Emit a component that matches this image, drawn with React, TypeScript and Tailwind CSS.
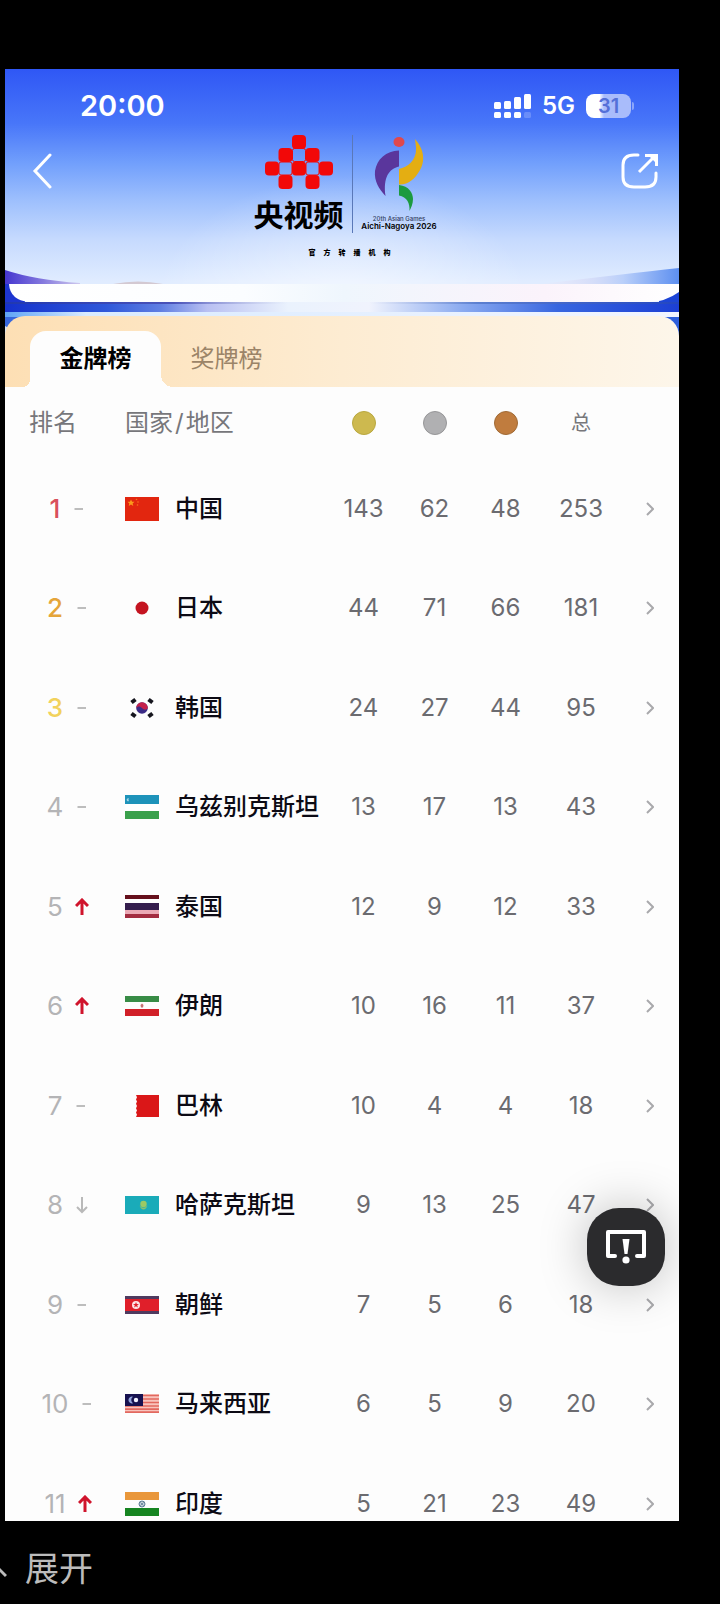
import { useState } from 'react';
import type { ReactNode } from 'react';

type Trend = 'same' | 'up' | 'down';

interface Standing {
  rank: number;
  trend: Trend;
  code: string;
  name: string;
  gold: number;
  silver: number;
  bronze: number;
  total: number;
}

const standings: Standing[] = [
  { rank: 1, trend: 'same', code: 'cn', name: '中国', gold: 143, silver: 62, bronze: 48, total: 253 },
  { rank: 2, trend: 'same', code: 'jp', name: '日本', gold: 44, silver: 71, bronze: 66, total: 181 },
  { rank: 3, trend: 'same', code: 'kr', name: '韩国', gold: 24, silver: 27, bronze: 44, total: 95 },
  { rank: 4, trend: 'same', code: 'uz', name: '乌兹别克斯坦', gold: 13, silver: 17, bronze: 13, total: 43 },
  { rank: 5, trend: 'up', code: 'th', name: '泰国', gold: 12, silver: 9, bronze: 12, total: 33 },
  { rank: 6, trend: 'up', code: 'ir', name: '伊朗', gold: 10, silver: 16, bronze: 11, total: 37 },
  { rank: 7, trend: 'same', code: 'bh', name: '巴林', gold: 10, silver: 4, bronze: 4, total: 18 },
  { rank: 8, trend: 'down', code: 'kz', name: '哈萨克斯坦', gold: 9, silver: 13, bronze: 25, total: 47 },
  { rank: 9, trend: 'same', code: 'kp', name: '朝鲜', gold: 7, silver: 5, bronze: 6, total: 18 },
  { rank: 10, trend: 'same', code: 'my', name: '马来西亚', gold: 6, silver: 5, bronze: 9, total: 20 },
  { rank: 11, trend: 'up', code: 'in', name: '印度', gold: 5, silver: 21, bronze: 23, total: 49 },
];

const rankColors: Record<number, string> = {
  1: 'text-[#d9505c] font-medium',
  2: 'text-[#e5a53a] font-medium',
  3: 'text-[#f2d25c] font-medium',
};

const flags: Record<string, ReactNode> = {
  cn: (
    <>
      <rect width="34" height="24" fill="#e2260f" />
      <path d="M6 2.500l1.100 2.300h2.400L7.600 6.400l.7 2.500L6 7.500 3.700 8.900l.7-2.500L2.500 4.800h2.400z" fill="#fb9a1c" />
      <circle cx="11.500" cy="2.500" r=".8" fill="#f7711c" />
      <circle cx="13" cy="5" r=".8" fill="#f7711c" />
      <circle cx="12.500" cy="8" r=".8" fill="#f7711c" />
    </>
  ),
  jp: <circle cx="17" cy="12" r="6.500" fill="#c41420" />,
  kr: (
    <>
      <circle cx="17" cy="12" r="5.800" fill="#3b2b86" />
      <path d="M11.200 12a5.800 5.800 0 0 1 11.600 0c-1.500 2.500-4 2-5.800 0s-4.300-2.300-5.800 0z" fill="#c4204a" />
      <path d="M6.500 6.500l4-3M23.500 3.500l4 3M6.500 17.500l4 3M23.500 20.500l4-3" stroke="#16161e" strokeWidth="4" />
    </>
  ),
  uz: (
    <>
      <rect width="34" height="9" fill="#1e93ba" />
      <rect y="9" width="34" height="7" fill="#fff" />
      <rect y="16" width="34" height="8" fill="#3aa04c" />
      <path d="M4 3.500a1.500 1.500 0 1 0 0 2.500 1.800 1.800 0 0 1 0-2.500z" fill="#a5d6e6" />
    </>
  ),
  th: (
    <>
      <rect width="34" height="4" fill="#66101c" />
      <rect y="8" width="34" height="7" fill="#341d4d" />
      <rect y="15" width="34" height="4" fill="#eba9b5" />
      <rect y="19" width="34" height="4" fill="#a32c40" />
    </>
  ),
  ir: (
    <>
      <rect y="2" width="34" height="6" fill="#388c46" />
      <rect y="15" width="34" height="7" fill="#d12028" />
      <path d="M17 9.500l1.500 1.500-.5 2.500h-2l-.5-2.500z" fill="#c47070" />
    </>
  ),
  bh: <path d="M11 1h23v22H11l1-2.200-1-2.200 1-2.200-1-2.200 1-2.200-1-2.200 1-2.200-1-2.200 1-2.200z" fill="#da1718" />,
  kz: (
    <>
      <rect y="3" width="34" height="18" fill="#1aabb9" />
      <circle cx="18.500" cy="11" r="3.200" fill="#9cc964" />
      <path d="M14.500 12.500q4 4.500 8 0-1.500 4-4 4t-4-4z" fill="#8bc46c" />
    </>
  ),
  kp: (
    <>
      <rect y="3" width="34" height="18" fill="#4f3a5f" />
      <rect y="6" width="34" height="12" fill="#e01f2a" />
      <circle cx="11" cy="12" r="4" fill="#fde5e8" />
      <path d="M11 9l.8 2H14l-1.800 1.300.7 2.200L11 13.200l-1.900 1.300.7-2.200L8 11h2.200z" fill="#e01f2a" />
    </>
  ),
  my: (
    <>
      <rect y="2" width="34" height="19" fill="#f8c4bd" />
      <path d="M0 3.500h34M0 7h34M0 10.500h34M0 14h34M0 17.200h34M0 20.200h34" stroke="#e2685f" strokeWidth="1.700" />
      <rect y="2" width="18" height="12" fill="#171250" />
      <path d="M8 4.800a3.400 3.400 0 1 0 0 6.400 3.800 3.800 0 0 1 0-6.400z" fill="#93a4dc" />
      <circle cx="11" cy="8" r="2.200" fill="#f2f2ff" />
    </>
  ),
  in: (
    <>
      <rect width="34" height="8" fill="#e9973b" />
      <rect y="16" width="34" height="8" fill="#168521" />
      <circle cx="17" cy="12" r="3" fill="none" stroke="#5f7f96" strokeWidth="1" />
      <path d="M17 9v6M14 12h6M15 10l4 4M19 10l-4 4" stroke="#5f7f96" strokeWidth=".7" />
    </>
  ),
};

function Flag({ code }: { code: string }) {
  return (
    <svg viewBox="0 0 34 24" className="h-6 w-[34px] shrink-0" aria-hidden="true">
      {flags[code]}
    </svg>
  );
}

function TrendMark({ trend }: { trend: Trend }) {
  if (trend === 'same') {
    return (
      <svg viewBox="0 0 14 18" className="h-[18px] w-3.5" fill="none">
        <path d="M2.500 9h8.500" stroke="#bdbdbd" strokeWidth="2" />
      </svg>
    );
  }
  if (trend === 'up') {
    return (
      <svg viewBox="0 0 14 18" className="h-[18px] w-3.5" fill="none">
        <path d="M7 17V2.500M1 8l6-6 6 6" stroke="#d0142c" strokeWidth="3" />
      </svg>
    );
  }
  return (
    <svg viewBox="0 0 14 18" className="h-[18px] w-3.5" fill="none">
      <path d="M7 1v14.500M2 11l5 5 5-5" stroke="#b9b9b9" strokeWidth="2" />
    </svg>
  );
}

function StatusBar() {
  return (
    <div className="flex h-[62px] items-center justify-between pt-3 pr-[45px] pl-[75px] text-white">
      <span className="text-[29px] leading-9 font-semibold">20:00</span>
      <div className="flex items-center gap-[11px]">
        <svg viewBox="0 0 37 24" className="h-6 w-[37px]" fill="#fff">
          <rect x="0" y="8" width="7" height="7" rx="1.500" />
          <rect x="10" y="7" width="7" height="8" rx="1.500" />
          <rect x="20" y="3" width="7" height="12" rx="1.500" />
          <rect x="30" y="0" width="7" height="15" rx="1.500" />
          <rect x="0" y="18" width="7" height="6" rx="1.500" />
          <rect x="10" y="18" width="7" height="6" rx="1.500" />
          <rect x="20" y="18" width="7" height="6" rx="1.500" />
          <rect x="30" y="18" width="7" height="6" rx="1.500" opacity=".2" />
        </svg>
        <span className="text-[24px] leading-8 font-semibold">5G</span>
        <div className="flex items-center gap-px">
          <span className="flex h-6 w-[45px] items-center justify-center rounded-lg bg-linear-to-r from-white from-30% to-[#a9bcfb] to-40% text-[20px] leading-6 font-semibold text-[#5470d8]">
            31
          </span>
          <span className="h-2 w-0.5 rounded-r bg-[#8ba6fa]" />
        </div>
      </div>
    </div>
  );
}

function VideoLogo() {
  return (
    <div className="flex flex-col items-center">
      <svg viewBox="0 0 68 54" className="h-[54px] w-[68px]">
        <g fill="#f20808">
          <rect x="27" y="0" width="14" height="14" rx="4" />
          <rect x="13.500" y="13" width="14" height="14" rx="4" />
          <rect x="40.500" y="13" width="14" height="14" rx="4" />
          <rect x="0" y="26.500" width="14" height="14" rx="4" />
          <rect x="27" y="26.500" width="14" height="14" rx="4" />
          <rect x="54" y="26.500" width="14" height="14" rx="4" />
          <rect x="13.500" y="40" width="14" height="14" rx="4" />
          <rect x="40.500" y="40" width="14" height="14" rx="4" />
        </g>
        <g fill="none" stroke="#f20808" strokeWidth="1">
          <rect x="27.500" y="13.500" width="13" height="13" rx="2" />
          <rect x="14" y="27" width="13" height="13" rx="2" />
          <rect x="41" y="27" width="13" height="13" rx="2" />
        </g>
      </svg>
      <span className="mt-2 text-[30px] leading-9 font-bold text-black">央视频</span>
    </div>
  );
}

function GamesLogo() {
  return (
    <div className="flex w-[73px] flex-col items-center pt-0.5">
      <svg viewBox="0 0 50 75" className="h-[75px] w-[50px]">
        <ellipse cx="25" cy="5" rx="5.500" ry="5" fill="#e0484c" />
        <path d="M25 13.500v16C15 32 9 40 11.500 59 5 52 0 44 1 34 3 22 12 14 25 13.500z" fill="#5a369c" />
        <path d="M41 2c8 9 11 20 5 31-5 9-12 15-21 14.500V32c9-2 18-9 17-22z" fill="#e4ae12" />
        <path d="M25 48c10 1 14 8 14 14 0 5-2 9-3.500 12C36 66 33 60 25 58.500z" fill="#1c9a3f" />
      </svg>
      <span className="mt-1 text-[6px] leading-[6px] font-medium whitespace-nowrap text-[#2f3a5c]">20th Asian Games</span>
      <span className="text-[8px] leading-2 font-semibold whitespace-nowrap text-black">Aichi-Nagoya 2026</span>
    </div>
  );
}

function BannerWaves() {
  return (
    <svg
      viewBox="0 0 674 80"
      preserveAspectRatio="none"
      className="absolute inset-x-0 -bottom-5 h-20 w-full"
      aria-hidden="true"
    >
      <defs>
        <linearGradient id="band">
          <stop offset="0" stopColor="#1531cc" />
          <stop offset=".15" stopColor="#2f58da" />
          <stop offset=".23" stopColor="#5f7ee2" />
          <stop offset=".3" stopColor="#b9c0f2" />
          <stop offset=".42" stopColor="#eaf2fd" />
          <stop offset=".54" stopColor="#f0f3fd" />
          <stop offset=".68" stopColor="#8aaaf0" />
          <stop offset=".82" stopColor="#3866e0" />
          <stop offset="1" stopColor="#1c3fd4" />
        </linearGradient>
        <linearGradient id="edge">
          <stop offset="0" stopColor="#2038b0" />
          <stop offset=".25" stopColor="#4a52b8" />
          <stop offset=".42" stopColor="#c9cfe6" stopOpacity="0" />
          <stop offset=".54" stopColor="#c9cfe6" stopOpacity="0" />
          <stop offset=".7" stopColor="#5b7fd0" />
          <stop offset="1" stopColor="#2346c0" />
        </linearGradient>
        <linearGradient id="glow">
          <stop offset="0" stopColor="#5fa4f6" />
          <stop offset=".12" stopColor="#d9ebff" />
          <stop offset="1" stopColor="#f2f5ff" />
        </linearGradient>
        <linearGradient id="panel">
          <stop offset="0" stopColor="#ffffff" />
          <stop offset=".35" stopColor="#fbfdff" />
          <stop offset=".5" stopColor="#eff6fd" />
          <stop offset=".8" stopColor="#fbf3fb" />
          <stop offset="1" stopColor="#ffffff" />
        </linearGradient>
        <linearGradient id="violet">
          <stop offset="0" stopColor="#4536cf" />
          <stop offset=".5" stopColor="#8479de" />
          <stop offset="1" stopColor="#cfc9ee" />
        </linearGradient>
        <linearGradient id="sky">
          <stop offset="0" stopColor="#f3dfee" stopOpacity="0" />
          <stop offset=".6" stopColor="#b9cffa" />
          <stop offset="1" stopColor="#5d8ff0" />
        </linearGradient>
      </defs>
      <path d="M0 14Q30 24 75 27v1H0z" fill="url(#violet)" />
      <path d="M108 28q25-5 50 0z" fill="#d3c9d2" />
      <path d="M535 28Q620 18 674 12v16z" fill="url(#sky)" />
      <path d="M0 28h20v20H0z" fill="#1d35d0" />
      <path d="M654 34h20v14h-20z" fill="#1d45d6" />
      <path d="M0 46h674v10H0z" fill="url(#band)" />
      <path d="M0 46h674v2H0z" fill="url(#edge)" />
      <path d="M0 56h674v5H0z" fill="url(#glow)" />
      <path d="M0 61h30v19H0z" fill="#3767dd" />
      <path d="M644 61h30v19h-30z" fill="#2e5fdc" />
      <path d="M0 70q6 2 10 10H0z" fill="#d5e2f6" />
      <path d="M4 28q1 16 20 18h620q16 0 30-10v-8z" fill="url(#panel)" />
    </svg>
  );
}

function Header() {
  return (
    <header className="relative h-[247px] bg-[linear-gradient(180deg,#2f57f5_0%,#4876f9_22%,#719ffc_38%,#9dbffd_53%,#c6dafe_69%,#e0ecff_86%)]">
      <div className="absolute inset-0 bg-radial-[at_50%_100%] from-white/60 to-transparent to-40%" />
      <BannerWaves />
      <div className="relative">
        <StatusBar />
        <div className="flex items-start">
          <button type="button" aria-label="返回" className="flex h-20 w-20 items-center pl-[27px]">
            <svg viewBox="0 0 20 36" className="h-9 w-5" fill="none">
              <path d="M18 2L3 18l15 16" stroke="#fff" strokeWidth="3" strokeLinecap="round" />
            </svg>
          </button>
          <div className="flex flex-1 flex-col items-center pt-1">
            <div className="mr-2.5 flex">
              <VideoLogo />
              <div className="mr-[10px] ml-2 w-px bg-[#5a78b8]" />
              <GamesLogo />
            </div>
            <div className="mt-4 flex gap-2 text-[7px] leading-2 font-black text-black">
              {['官', '方', '转', '播', '机', '构'].map((char) => (
                <span key={char}>{char}</span>
              ))}
            </div>
          </div>
          <button type="button" aria-label="分享" className="flex h-20 w-[65px] items-center justify-end pr-5">
            <svg viewBox="0 0 38 36" className="h-9 w-[38px]" fill="none" stroke="#fff" strokeWidth="3">
              <path d="M17 2h-4Q2 2 2 12v12q0 10 11 10h11q11 0 11-10v-4" strokeLinecap="round" />
              <path d="M18 19L34 3" />
              <path d="M24 2.500h11.500V13" />
              <path d="M27 2h9v9z" fill="#fff" stroke="none" />
            </svg>
          </button>
        </div>
      </div>
    </header>
  );
}

function MedalDot({ label, className }: { label: string; className: string }) {
  return <span role="img" aria-label={label} className={`mx-auto block size-6 rounded-full border ${className}`} />;
}

export default function App() {
  const [activeTab, setActiveTab] = useState('gold');

  return (
    <div className="flex h-screen flex-col bg-black pt-[69px] font-[Inter,'Noto_Sans_CJK_SC',sans-serif]">
      <main className="relative mr-[41px] ml-[5px] min-h-0 flex-1 overflow-hidden bg-[#fdfdfd]">
        <Header />

        {/* Tabs */}
        <div
          role="tablist"
          className="relative flex h-[71px] items-end rounded-t-[20px] bg-linear-to-r from-[#fddfb4] via-[#fdecd2] via-50% to-[#fdf6ea] pl-[25px] text-[24px] leading-8"
        >
          <button
            type="button"
            role="tab"
            aria-selected={activeTab === 'gold'}
            onClick={() => setActiveTab('gold')}
            className="relative h-14 w-[131px] rounded-t-2xl bg-[#fdfdfd] font-bold text-black before:absolute before:bottom-0 before:-left-2 before:size-2 before:bg-[radial-gradient(circle_at_top_left,transparent_8px,#fdfdfd_8px)] after:absolute after:-right-3 after:bottom-0 after:size-3 after:bg-[radial-gradient(circle_at_top_right,transparent_12px,#fdfdfd_12px)]"
          >
            金牌榜
          </button>
          <button
            type="button"
            role="tab"
            aria-selected={activeTab === 'medal'}
            onClick={() => setActiveTab('medal')}
            className="h-14 w-[131px] text-[#9b8468]"
          >
            奖牌榜
          </button>
        </div>

        {/* Medal table */}
        <table className="w-full table-fixed border-collapse text-center text-[24px] leading-8 text-[#6b6b70]">
          <colgroup>
            <col className="w-[120px]" />
            <col />
            <col className="w-[71px]" />
            <col className="w-[71px]" />
            <col className="w-[71px]" />
            <col className="w-[80px]" />
            <col className="w-[58px]" />
          </colgroup>
          <thead>
            <tr className="h-[72px] text-[#77777b]">
              <th scope="col" className="pl-6 text-left font-normal">排名</th>
              <th scope="col" className="text-left font-normal">
                国家<span className="mx-0.5">/</span>地区
              </th>
              <th scope="col">
                <MedalDot label="金牌" className="border-[#b9a83f] bg-[#cdb94f]" />
              </th>
              <th scope="col">
                <MedalDot label="银牌" className="border-[#969698] bg-[#b0b0b2]" />
              </th>
              <th scope="col">
                <MedalDot label="铜牌" className="border-[#a06a35] bg-[#c07c3e]" />
              </th>
              <th scope="col" className="text-[20px] font-normal">总</th>
              <td />
            </tr>
          </thead>
          <tbody>
            {standings.map((item) => (
              <tr key={item.code} className="odd:h-[99px] even:h-[100px]">
                <td className="pl-1.5">
                  <div className="flex items-center justify-center gap-3">
                    <span className={`text-[26px] ${rankColors[item.rank] ?? 'text-[#b4b4b6]'}`}>{item.rank}</span>
                    <TrendMark trend={item.trend} />
                  </div>
                </td>
                <td>
                  <div className="flex items-center gap-4">
                    <Flag code={item.code} />
                    <span className="font-medium whitespace-nowrap text-[#0c0a14]">{item.name}</span>
                  </div>
                </td>
                <td>{item.gold}</td>
                <td>{item.silver}</td>
                <td>{item.bronze}</td>
                <td>{item.total}</td>
                <td>
                  <button type="button" aria-label={item.name} className="mx-auto flex size-8 items-center justify-center">
                    <svg viewBox="0 0 8 14" className="h-3.5 w-2" fill="none">
                      <path d="M1 1l6 6-6 6" stroke="#a9a9ac" strokeWidth="2" />
                    </svg>
                  </button>
                </td>
              </tr>
            ))}
          </tbody>
        </table>

        {/* Feedback button */}
        <button
          type="button"
          aria-label="反馈"
          className="absolute right-3.5 bottom-[235px] flex size-[78px] items-center justify-center rounded-[32px] bg-[#2b2b2d] shadow-[0_0_48px_rgba(0,0,0,0.25)]"
        >
          <svg viewBox="0 0 40 36" className="h-9 w-10" fill="none" stroke="#fff">
            <path d="M9 27H2V3h36v24h-7" strokeWidth="4" strokeLinejoin="round" strokeLinecap="round" />
            <path d="M16.500 10h7l-2 15h-3z" fill="#fff" stroke="none" />
            <circle cx="20" cy="31" r="3.600" fill="#fff" stroke="none" />
          </svg>
        </button>
      </main>

      <footer className="flex h-[83px] shrink-0 items-center pt-3">
        <button type="button" className="flex items-center gap-[18px] text-[34px] leading-10 text-[#bcbcbc]">
          <svg viewBox="0 0 7 24" className="h-6 w-[7px]" fill="none">
            <path d="M-8 20L-2 11l8 8" stroke="#bcbcbc" strokeWidth="3" />
          </svg>
          展开
        </button>
      </footer>
    </div>
  );
}
